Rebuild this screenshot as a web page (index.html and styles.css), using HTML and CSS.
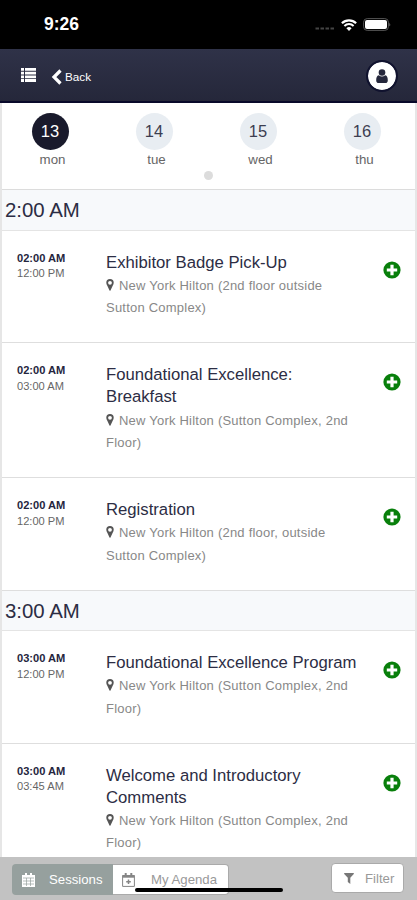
FILE: index.html
```
<!DOCTYPE html>
<html lang="en">
<head>
    <meta charset="UTF-8">
    <meta name="viewport" content="width=device-width, initial-scale=1.0">
    <title>Agenda - Sessions</title>
    <link rel="stylesheet" href="styles.css">
</head>
<body>
    <!-- shared icons -->
    <svg class="icon-defs" xmlns="http://www.w3.org/2000/svg">
        <symbol id="pin" viewBox="0 0 8 12">
            <path fill-rule="evenodd" d="M4 0a3.7 3.7 0 0 1 3.7 3.8c0 1.1-.4 1.8-.9 2.8L4.6 11.3q-.6 1-1.2 0L1.2 6.6C.7 5.6.3 4.9.3 3.8A3.7 3.7 0 0 1 4 0zM4 1.9a1.9 1.9 0 1 0 0 3.800 1.900 1.900 0 0 0 0-3.800z"/>
        </symbol>
        <symbol id="plus" viewBox="0 0 18 18">
            <circle cx="9" cy="9" r="8.6"/>
            <path d="M9 3.800v10.400M3.800 9h10.400" stroke="#fff" stroke-width="3.2"/>
        </symbol>
    </svg>

    <div class="phone">
        <div class="status-bar">
            <span class="clock">9:26</span>
            <div class="status-icons">
                <svg class="signal" viewBox="0 0 20 3"><path d="M.5 1.500h3.500M5.500 1.500H9M10.500 1.500H14M15.500 1.500H19" stroke="#444" stroke-width="2"/></svg>
                <svg class="wifi" viewBox="0 0 16 12">
                    <path d="M.9 4.300a10 10 0 0 1 14.200 0" fill="none" stroke="#fff" stroke-width="2.2"/>
                    <path d="M3.400 7a6.500 6.500 0 0 1 9.200 0" fill="none" stroke="#fff" stroke-width="2"/>
                    <path d="M5.400 9.200a3.700 3.700 0 0 1 5.200 0L8 12z" fill="#fff"/>
                </svg>
                <svg class="battery" viewBox="0 0 28 13">
                    <rect x=".6" y=".6" width="24.8" height="11.8" rx="3.6" fill="none" stroke="#555"/>
                    <rect x="2" y="2" width="22" height="9" rx="2" fill="#fff"/>
                    <path d="M26.400 4.500q1.600 2 0 4z" fill="#777"/>
                </svg>
            </div>
        </div>

        <div class="nav-bar">
            <svg class="list-icon" viewBox="0 0 15 14" fill="#fff">
                <path d="M0 0h3v2.800H0zM4 0h11v2.800H4zM0 3.700h3v2.800H0zM4 3.700h11v2.800H4zM0 7.400h3v2.800H0zM4 7.400h11v2.800H4zM0 11.100h3v2.800H0zM4 11.100h11v2.800H4z"/>
            </svg>
            <a href="#" class="back-link">
                <svg viewBox="0 0 11 16"><path d="M9.500 1.500 3 8l6.500 6.500" fill="none" stroke="#fff" stroke-width="3.2"/></svg>
                Back
            </a>
            <div class="avatar">
                <svg viewBox="0 0 12 14" fill="#25273c">
                    <circle cx="6" cy="3.5" r="3.3"/>
                    <path d="M2.800 6.200Q6 9 9.200 6.200c2 .5 2.600 2.300 2.600 5Q11.800 14 9.400 14H2.600Q.2 14 .2 11.200c0-2.700.6-4.500 2.600-5z"/>
                </svg>
            </div>
        </div>

        <div class="content">
            <div class="days">
                <div class="day active"><span class="date">13</span><span class="name">mon</span></div>
                <div class="day"><span class="date">14</span><span class="name">tue</span></div>
                <div class="day"><span class="date">15</span><span class="name">wed</span></div>
                <div class="day"><span class="date">16</span><span class="name">thu</span></div>
                <div class="page-dot"></div>
            </div>

            <h2 class="hour">2:00 AM</h2>
            <div class="session">
                <div class="times"><b>02:00 AM</b><span>12:00 PM</span></div>
                <div class="info">
                    <div class="title">Exhibitor Badge Pick-Up</div>
                    <div class="place"><svg class="pin"><use href="#pin"/></svg>New York Hilton (2nd floor outside<br>Sutton Complex)</div>
                </div>
                <svg class="add"><use href="#plus"/></svg>
            </div>
            <div class="session">
                <div class="times"><b>02:00 AM</b><span>03:00 AM</span></div>
                <div class="info">
                    <div class="title">Foundational Excellence:<br>Breakfast</div>
                    <div class="place"><svg class="pin"><use href="#pin"/></svg>New York Hilton (Sutton Complex, 2nd<br>Floor)</div>
                </div>
                <svg class="add"><use href="#plus"/></svg>
            </div>
            <div class="session">
                <div class="times"><b>02:00 AM</b><span>12:00 PM</span></div>
                <div class="info">
                    <div class="title">Registration</div>
                    <div class="place"><svg class="pin"><use href="#pin"/></svg>New York Hilton (2nd floor, outside<br>Sutton Complex)</div>
                </div>
                <svg class="add"><use href="#plus"/></svg>
            </div>

            <h2 class="hour">3:00 AM</h2>
            <div class="session">
                <div class="times"><b>03:00 AM</b><span>12:00 PM</span></div>
                <div class="info">
                    <div class="title">Foundational Excellence Program</div>
                    <div class="place"><svg class="pin"><use href="#pin"/></svg>New York Hilton (Sutton Complex, 2nd<br>Floor)</div>
                </div>
                <svg class="add"><use href="#plus"/></svg>
            </div>
            <div class="session">
                <div class="times"><b>03:00 AM</b><span>03:45 AM</span></div>
                <div class="info">
                    <div class="title">Welcome and Introductory<br>Comments</div>
                    <div class="place"><svg class="pin"><use href="#pin"/></svg>New York Hilton (Sutton Complex, 2nd<br>Floor)</div>
                </div>
                <svg class="add"><use href="#plus"/></svg>
            </div>
        </div>

        <div class="bottom-bar">
            <div class="tabs">
                <button class="tab selected">
                    <svg viewBox="0 0 13 14">
                        <path d="M0 2h13v12H0zM3 0h2v3H3zM8 0h2v3H8z" fill="#fff"/>
                        <path d="M1 5h11M1 8h11M1 11h11M4.500 5v8M8.500 5v8" stroke="#96a09e" stroke-width=".7"/>
                    </svg>
                    Sessions
                </button>
                <button class="tab">
                    <svg viewBox="0 0 13 14" fill="none" stroke="#858585">
                        <path d="M.6 2.500h11.800v10.900H.6z"/>
                        <path d="M.6 3.400h11.800" stroke-width="2.6"/>
                        <path d="M3.700 0v3M9.300 0v3" stroke-width="2"/>
                        <path d="M6.500 6.500v4.600M4.200 8.800h4.600" stroke-width="1.5"/>
                    </svg>
                    My Agenda
                </button>
            </div>
            <button class="filter">
                <svg viewBox="0 0 10 11" fill="#777"><path d="M.2 0h9.600v1L6.300 4.800V11L3.800 9V4.800L.2 1z"/></svg>
                Filter
            </button>
            <div class="home-indicator"></div>
        </div>
    </div>
</body>
</html>
```
FILE: styles.css
```
* {
    box-sizing: border-box;
}

body, html {
    height: 100%;
    margin: 0;
    font-family: "Liberation Sans", Arial, sans-serif;
    background-color: #fff;
    overflow: hidden;
}

.icon-defs {
    position: absolute;
    width: 0;
    height: 0;
}

.phone {
    display: flex;
    flex-direction: column;
    height: 900px;
}

/* status bar */
.status-bar {
    display: flex;
    flex: none;
    justify-content: space-between;
    align-items: center;
    height: 49px;
    padding: 0 26px 0 44px;
    background-color: #000;
    color: #fff;
}

.clock {
    font-size: 17.5px;
    font-weight: bold;
}

.status-icons {
    display: flex;
    align-items: center;
    gap: 6px;
}

.signal { width: 20px; height: 3px; margin-top: 8px; }
.wifi { width: 16px; height: 12px; }
.battery { width: 28px; height: 13px; }

/* nav */
.nav-bar {
    display: flex;
    flex: none;
    align-items: center;
    height: 54px;
    padding: 0 19px 0 21px;
    background: linear-gradient(#2f3248, #25273a);
    border-bottom: 2px solid #08092a;
}

.list-icon { width: 15px; height: 14px; }

.back-link {
    display: flex;
    align-items: center;
    gap: 3px;
    margin: 3px 0 0 15px;
    font-size: 11.7px;
    color: #fff;
    text-decoration: none;
}

.back-link svg { width: 11px; height: 16px; }

.avatar {
    display: flex;
    align-items: center;
    justify-content: center;
    width: 32px;
    height: 32px;
    margin: 1px 0 0 auto;
    border: 2px solid #10122e;
    border-radius: 50%;
    background-color: #fff;
    background-clip: padding-box;
}

.avatar svg { width: 12px; height: 14px; }

/* agenda */
.content {
    flex: 1;
    min-height: 0;
    overflow: hidden;
    border: solid #e6e6e6;
    border-width: 0 2px;
}

.days {
    position: relative;
    display: grid;
    grid-template-columns: repeat(4, 104px);
    height: 87px;
    margin-left: -4px;
    padding-top: 10px;
    border-bottom: 1px solid #dcdcdc;
}

.day {
    display: flex;
    flex-direction: column;
    align-items: center;
}

.date {
    width: 37px;
    height: 37px;
    border-radius: 50%;
    background-color: #e8edf2;
    color: #3c3e50;
    font-size: 16.5px;
    line-height: 37px;
    text-align: center;
}

.active .date {
    background-color: #191a2c;
    color: #fff;
}

.name {
    margin: 1px 0 0 5px;
    font-size: 13.3px;
    line-height: 17px;
    color: #666;
}

.page-dot {
    position: absolute;
    left: 206px;
    top: 68px;
    width: 9px;
    height: 9px;
    border-radius: 50%;
    background-color: #dcdcdc;
}

.hour {
    height: 40.5px;
    margin: 0;
    padding-left: 3px;
    background-color: #f7f9fb;
    border-bottom: 1px solid #e4e4e4;
    color: #2c2d44;
    font-size: 20.4px;
    font-weight: normal;
    line-height: 41px;
}

.session {
    display: flex;
    height: 112.5px;
    padding: 20px 14px 0 15px;
    border-bottom: 1px solid #dedede;
}

.session:has(.title br) {
    height: 135px;
}

.times {
    display: flex;
    flex-direction: column;
    width: 89px;
    font-size: 11.1px;
    line-height: 15.5px;
    color: #666;
}

.times b { color: #25263e; }

.info {
    flex: 1;
    padding-top: 1px;
    white-space: nowrap;
}

.title {
    font-size: 16.7px;
    line-height: 22.3px;
    color: #2c2d44;
}

.place {
    padding-top: 1px;
    font-size: 13px;
    letter-spacing: 0.22px;
    line-height: 22.2px;
    color: #888;
}

.pin {
    width: 8px;
    height: 12px;
    margin-right: 5px;
    vertical-align: -1px;
    fill: #555;
}

.add {
    width: 18px;
    height: 18px;
    margin-top: 10px;
    fill: #087f0b;
}

/* bottom bar */
.bottom-bar {
    position: relative;
    display: flex;
    flex: none;
    justify-content: space-between;
    height: 43px;
    padding: 6px 13px 0 12px;
    background-color: #c2c2c2;
}

.tabs {
    display: flex;
    height: 31px;
    margin-top: 1px;
}

.tab, .filter {
    display: flex;
    align-items: center;
    padding: 0;
    border: 1px solid #aaa;
    background-color: #fff;
    color: #999;
    font-family: inherit;
    font-size: 13.2px;
}

.tab {
    width: 116px;
    gap: 16px;
    padding-left: 9px;
    border-left: 0;
    border-radius: 0 4px 4px 0;
}

.tab.selected {
    width: 101px;
    padding-left: 10px;
    gap: 14px;
    border: 0;
    border-radius: 4px 0 0 4px;
    background-color: #96a09e;
    color: #fff;
}

.tab svg { width: 13px; height: 14px; }

.filter {
    width: 73px;
    height: 30px;
    gap: 11px;
    padding-left: 12px;
    border-radius: 4px;
}

.filter svg { width: 10px; height: 11px; }

.home-indicator {
    position: absolute;
    left: 135px;
    top: 31px;
    width: 148px;
    height: 4px;
    border-radius: 2px;
    background-color: #000;
}
```
